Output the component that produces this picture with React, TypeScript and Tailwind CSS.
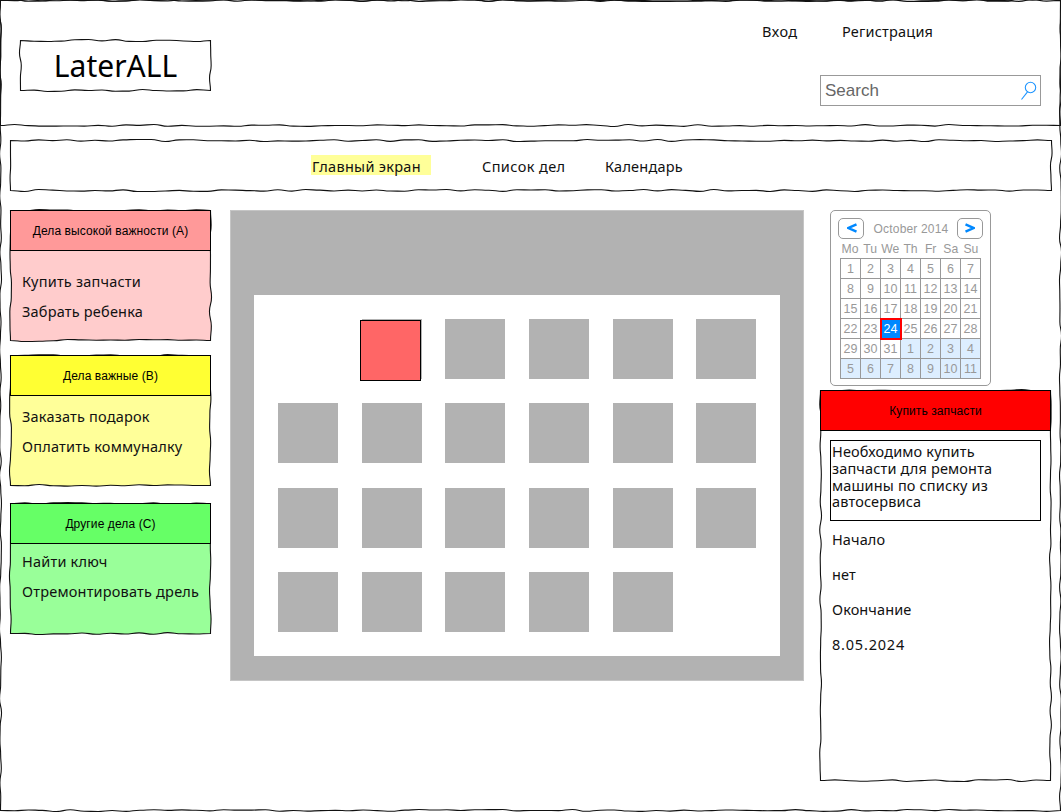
import React from "react";

type FrameProps = { w: number; h: number; seed: number; fill?: string };

function edge(x1: number, y1: number, x2: number, y2: number, seed: number) {
  const len = Math.hypot(x2 - x1, y2 - y1);
  const n = Math.max(2, Math.round(len / 14));
  const ux = (x2 - x1) / len;
  const uy = (y2 - y1) / len;
  const pts: number[][] = [];
  let s = seed * 7919 + 13;
  for (let i = 0; i <= n; i++) {
    s = (s * 1103515245 + 12345) % 2147483648;
    const r = i === 0 || i === n ? 0 : (s / 2147483648 - 0.5) * 2.1;
    const t = (len * i) / n;
    pts.push([x1 + ux * t - uy * r, y1 + uy * t + ux * r]);
  }
  let d = "";
  for (let i = 1; i < pts.length; i++) {
    const [ax, ay] = pts[i - 1];
    const [bx, by] = pts[i];
    const k = len / n / 2;
    d += ` C${(ax + ux * k).toFixed(2)} ${(ay + uy * k).toFixed(2)} ${(bx - ux * k).toFixed(2)} ${(by - uy * k).toFixed(2)} ${bx.toFixed(2)} ${by.toFixed(2)}`;
  }
  return d;
}

/* Hand-drawn outline behind a panel */
function Frame({ w, h, seed, fill = "none" }: FrameProps) {
  const r = w - 0.5;
  const b = h - 0.5;
  const d =
    "M0.5 0.5" +
    edge(0.5, 0.5, r, 0.5, seed) +
    edge(r, 0.5, r, b, seed + 1) +
    edge(r, b, 0.5, b, seed + 2) +
    edge(0.5, b, 0.5, 0.5, seed + 3) +
    "Z";
  return (
    <svg className="pointer-events-none absolute left-0 top-0 overflow-visible" width={w} height={h} aria-hidden="true">
      <path d={d} fill={fill} stroke="#111" strokeWidth="1.1" />
    </svg>
  );
}

const groups = [
  { title: "Дела высокой важности (A)", items: ["Купить запчасти", "Забрать ребенка"], head: "bg-[#ff9999]", fill: "#ffcccc", box: "h-[131px] mb-[14px]", pad: "pt-[22px]", h: 131 },
  { title: "Дела важные (B)", items: ["Заказать подарок", "Оплатить коммуналку"], head: "bg-[#ffff33]", fill: "#ffff99", box: "h-[131px] mb-[17px]", pad: "pt-[12px]", h: 131 },
  { title: "Другие дела (C)", items: ["Найти ключ", "Отремонтировать дрель"], head: "bg-[#66ff66]", fill: "#99ff99", box: "h-[131px]", pad: "pt-[9px]", h: 131 },
];

const weekdays = ["Mo", "Tu", "We", "Th", "Fr", "Sa", "Su"];
const days = Array.from({ length: 42 }, (_, i) => (i < 31 ? i + 1 : i - 30));
const slots = Array.from({ length: 24 }, (_, i) => i);

function DayCell({ i, day }: { i: number; day: number }) {
  const selected = i === 23;
  return (
    <div className={`relative flex items-center justify-center border-b border-r border-[#999] pt-px ${i > 30 ? "bg-[#ddeeff]" : ""}`}>
      {selected ? (
        <span className="absolute -left-[1.5px] -top-[1.5px] z-10 flex h-[22px] w-[22px] items-center justify-center border-2 border-[#f00] bg-[#0088ff] pt-px text-white">{day}</span>
      ) : (
        day
      )}
    </div>
  );
}

function Calendar() {
  return (
    <div className="relative z-10 ml-[10px] h-[176px] w-[161px] rounded-[5px] border border-[#999] bg-white pl-[7px] pt-[7px] font-['Liberation_Sans',sans-serif] text-[12.5px] leading-[14px] text-[#999]">
      <div className="flex w-[145px] items-center justify-between">
        <button className="flex h-[21px] w-[26px] items-center justify-center rounded-[5px] border border-[#999] pb-px pl-px text-[#0088ff]" aria-label="Previous month">
          <svg width="10" height="10" viewBox="0 0 10 10" fill="none" stroke="currentColor" strokeWidth="2.4"><path d="M9.5 1.3 1.5 5l8 3.7" /></svg>
        </button>
        <span className="pl-px text-[12px] tracking-[0.17px]">October 2014</span>
        <button className="flex h-[21px] w-[26px] items-center justify-center rounded-[5px] border border-[#999] pb-px text-[#0088ff]" aria-label="Next month">
          <svg width="10" height="10" viewBox="0 0 10 10" fill="none" stroke="currentColor" strokeWidth="2.4"><path d="M.5 1.3 8.5 5l-8 3.7" /></svg>
        </button>
      </div>
      <div className="ml-[2px] grid h-[19px] w-[141px] grid-cols-7 items-center text-center text-[12.2px]">
        {weekdays.map((d) => (
          <span key={d}>{d}</span>
        ))}
      </div>
      <div className="ml-[2px] grid w-[141px] auto-rows-[20px] grid-cols-[repeat(7,20px)] border-l border-t border-[#999]">
        {days.map((d, i) => (
          <DayCell key={i} i={i} day={d} />
        ))}
      </div>
    </div>
  );
}

export default function App() {
  return (
    <div className="relative h-[812px] w-[1061px] overflow-hidden bg-white font-['Noto_Sans',sans-serif] text-[14.5px] leading-[17px] tracking-[0.2px] text-[#111]">
      <Frame w={1061} h={811} seed={3} />
      <header className="relative flex h-[126px] justify-between pl-5 pr-5">
        <Frame w={1061} h={126} seed={21} />
        <div className="relative mt-10 flex h-[51px] w-[191px] items-center justify-center">
          <Frame w={191} h={51} seed={31} />
          <h1 className="relative pt-px text-[30px] leading-[34px] tracking-normal text-black">LaterALL</h1>
        </div>
        <div className="relative w-[280px]">
          <nav className="flex pl-px pt-[23px]">
            <a className="w-[80px] tracking-[0.5px]">Вход</a>
            <a>Регистрация</a>
          </nav>
          <div className="ml-[59px] mt-[35px] flex h-[31px] w-[221px] items-center justify-between border border-[#999] pl-1 pr-[2px] font-['Liberation_Sans',sans-serif] text-[17px] tracking-normal text-[#666]">
            <span>Search</span>
            <svg width="18" height="20" viewBox="0 0 18 20" fill="none" stroke="#1e95ff" strokeWidth="1.1">
              <circle cx="10.5" cy="6.5" r="5.2" />
              <path d="M7.5 10.8 1.5 18.5" />
            </svg>
          </div>
        </div>
      </header>

      <nav className="relative ml-[10px] mt-[14px] flex h-[51px] w-[1042px] pt-[15px]">
        <Frame w={1042} h={51} seed={42} />
        <a className="relative ml-[301px] h-5 w-[120px] bg-[#ffff99] pl-px pt-[3px] tracking-[0.3px]">Главный экран</a>
        <a className="relative ml-[51px] w-[123px] pt-[3px] tracking-[0.4px]">Список дел</a>
        <a className="relative pt-[3px]">Календарь</a>
      </nav>

      <div className="flex pl-[10px] pt-[19px]">
        <aside className="w-[220px]">
          {groups.map((g, gi) => (
            <section key={g.title} className={`relative w-[201px] ${g.box}`}>
              <Frame w={201} h={g.h} seed={57 + gi * 9} fill={g.fill} />
              <h2 className={`relative flex h-[41px] items-center justify-center border border-black pt-px font-['Liberation_Sans',sans-serif] text-[12px] tracking-[0.1px] text-black ${g.head}`}>{g.title}</h2>
              <ul className={`relative flex flex-col gap-[13px] whitespace-nowrap pl-3 ${g.pad}`}>
                {g.items.map((t) => (
                  <li key={t}>{t}</li>
                ))}
              </ul>
            </section>
          ))}
        </aside>

        <main className="h-[471px] w-[574px] border border-[#c5c5c5] bg-[#b2b2b2] px-[23px] pt-[84px]">
          <div className="grid h-[361px] w-[526px] auto-rows-[60px] grid-cols-[repeat(6,60px)] gap-x-[23.65px] gap-y-[24.35px] bg-white pl-[24px] pt-[24px]">
            {slots.map((i) =>
              i === 0 || i === 23 ? (
                <div key={i} />
              ) : (
                <div key={i} className="relative bg-[#b2b2b2]">
                  {i === 1 && <div className="absolute -left-[2px] top-px h-[61px] w-[61px] border border-black bg-[#ff6666]" />}
                </div>
              )
            )}
          </div>
        </main>

        <aside className="ml-4 w-[231px] tracking-normal">
          <Calendar />
          <section className="relative mt-1 h-[391px]">
            <Frame w={231} h={391} seed={91} />
            <h2 className="relative flex h-[41px] items-center justify-center border border-black bg-[#f00] pt-px font-['Liberation_Sans',sans-serif] text-[12px] tracking-[0.1px] text-black">Купить запчасти</h2>
            <p className="relative ml-[10px] mt-[9px] h-[81px] w-[211px] border border-black pl-px pr-4 pt-[2px] leading-[16.8px] tracking-[0.15px]">
              Необходимо купить запчасти для ремонта машины по списку из автосервиса
            </p>
            <dl className="relative flex flex-col gap-[18px] pl-3 pt-[10px] tracking-[0.1px]">
              <dt>Начало</dt>
              <dd>нет</dd>
              <dt>Окончание</dt>
              <dd className="tracking-[0.8px]">8.05.2024</dd>
            </dl>
          </section>
        </aside>
      </div>
    </div>
  );
}
